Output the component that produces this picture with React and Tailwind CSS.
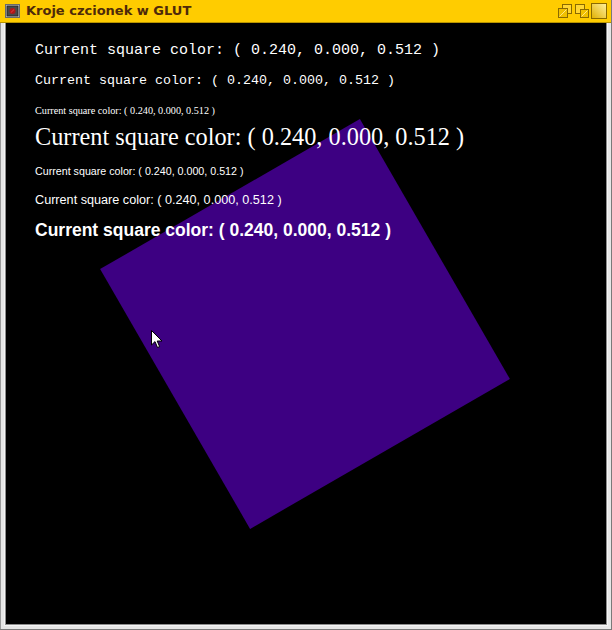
const LINE = "Current square color: ( 0.240, 0.000, 0.512 )";

function TitleIcon() {
  return (
    <svg width="15" height="14" viewBox="0 0 15 14">
      <rect x="0.5" y="0.5" width="14" height="13" fill="#d8d8d8" stroke="#6b6b6b" />
      <rect x="2" y="2" width="11" height="10" fill="#4a4a4a" stroke="#2a2a2a" />
      <circle cx="7.5" cy="7" r="3" fill="#b01818" />
      <path d="M5.8 8.6 L9.2 5.4" stroke="#e04040" strokeWidth="1" />
    </svg>
  );
}

function BtnDouble() {
  return (
    <svg width="16" height="16" viewBox="0 0 16 16">
      <rect x="5.5" y="1.5" width="9" height="9" fill="#ffd633" stroke="#8a6a00" />
      <rect x="1.5" y="5.5" width="9" height="9" fill="#f0c000" stroke="#8a6a00" />
      <path d="M2.5 13.5 L9.5 6.5" stroke="#ffe680" strokeWidth="1" />
    </svg>
  );
}

function BtnStack() {
  return (
    <svg width="16" height="16" viewBox="0 0 16 16">
      <rect x="1.5" y="1.5" width="9" height="9" fill="#ffd633" stroke="#8a6a00" />
      <rect x="6.5" y="6.5" width="8" height="8" fill="#f0c000" stroke="#8a6a00" />
      <path d="M7.5 13.5 L13.5 7.5" stroke="#ffe680" strokeWidth="1" />
    </svg>
  );
}

function BtnMax() {
  return (
    <svg width="16" height="16" viewBox="0 0 16 16">
      <defs>
        <linearGradient id="gmax" x1="0" y1="1" x2="1" y2="0">
          <stop offset="0" stopColor="#e0b000" />
          <stop offset="1" stopColor="#fff0a0" />
        </linearGradient>
      </defs>
      <rect x="0.5" y="0.5" width="15" height="15" fill="url(#gmax)" stroke="#8a6a00" />
    </svg>
  );
}

function Cursor() {
  return (
    <svg width="12" height="19" viewBox="0 0 12 19">
      <path
        d="M0.5 0.5 L0.5 15 L4 11.6 L6.5 17.5 L8.6 16.6 L6.2 11 L11 11 Z"
        fill="#ffffff"
        stroke="#000000"
        strokeWidth="1"
        strokeLinejoin="round"
      />
    </svg>
  );
}

export default function App() {
  return (
    <div className="w-[612px] h-[630px] flex flex-col bg-[#bdbdbd] border-r border-b border-[#7a7a7a]">
      {/* title bar */}
      <div className="h-[23px] flex items-center bg-[#ffcc00] border-b border-[#b89400] pl-[5px] pr-[4px]">
        <TitleIcon />
        <span className="ml-[6px] text-[13px] font-bold text-[#4e2a0a] font-['DejaVu_Sans',sans-serif]">
          Kroje czcionek w GLUT
        </span>
        <div className="ml-auto flex gap-[1px]">
          <BtnDouble />
          <BtnStack />
          <BtnMax />
        </div>
      </div>

      {/* window body */}
      <div className="flex-1 flex px-[3px] pb-[3px] bg-[#e6e6e6] border-l border-[#9a9a9a]">
        <div className="flex-1 border border-[#f4f4f4] border-t-0">
          <div className="relative w-full h-full bg-black overflow-hidden border-l border-b border-r border-[#8c8c8c]">
            {/* rotated square */}
            <div className="absolute left-[149px] top-[151px] w-[300px] h-[300px] bg-[#3d0082] -rotate-30" />

            {/* text lines */}
            <div className="relative z-10 pl-[29px] pt-[13px] text-white">
              <div className="h-[30px] leading-[30px] text-[15px] font-['Liberation_Mono',monospace] whitespace-pre">
                {LINE}
              </div>
              <div className="h-[30px] leading-[30px] text-[13.33px] font-['Liberation_Mono',monospace] whitespace-pre">
                {LINE}
              </div>
              <div className="h-[29px] leading-[29px] text-[10.2px] font-['Liberation_Serif',serif] whitespace-pre">
                {LINE}
              </div>
              <div className="h-[24px] leading-[24px] text-[24.3px] font-['Liberation_Serif',serif] whitespace-pre">
                {LINE}
              </div>
              <div className="h-[44px] leading-[44px] text-[10.7px] font-['Liberation_Sans',sans-serif] whitespace-pre">
                {LINE}
              </div>
              <div className="h-[15px] leading-[15px] text-[12.65px] font-['Liberation_Sans',sans-serif] whitespace-pre">
                {LINE}
              </div>
              <div className="h-[44px] leading-[44px] text-[17.5px] font-semibold font-['Liberation_Sans',sans-serif] whitespace-pre">
                {LINE}
              </div>
            </div>

            {/* mouse pointer */}
            <div className="absolute left-[145px] top-[307px] z-20">
              <Cursor />
            </div>
          </div>
        </div>
      </div>
    </div>
  );
}
